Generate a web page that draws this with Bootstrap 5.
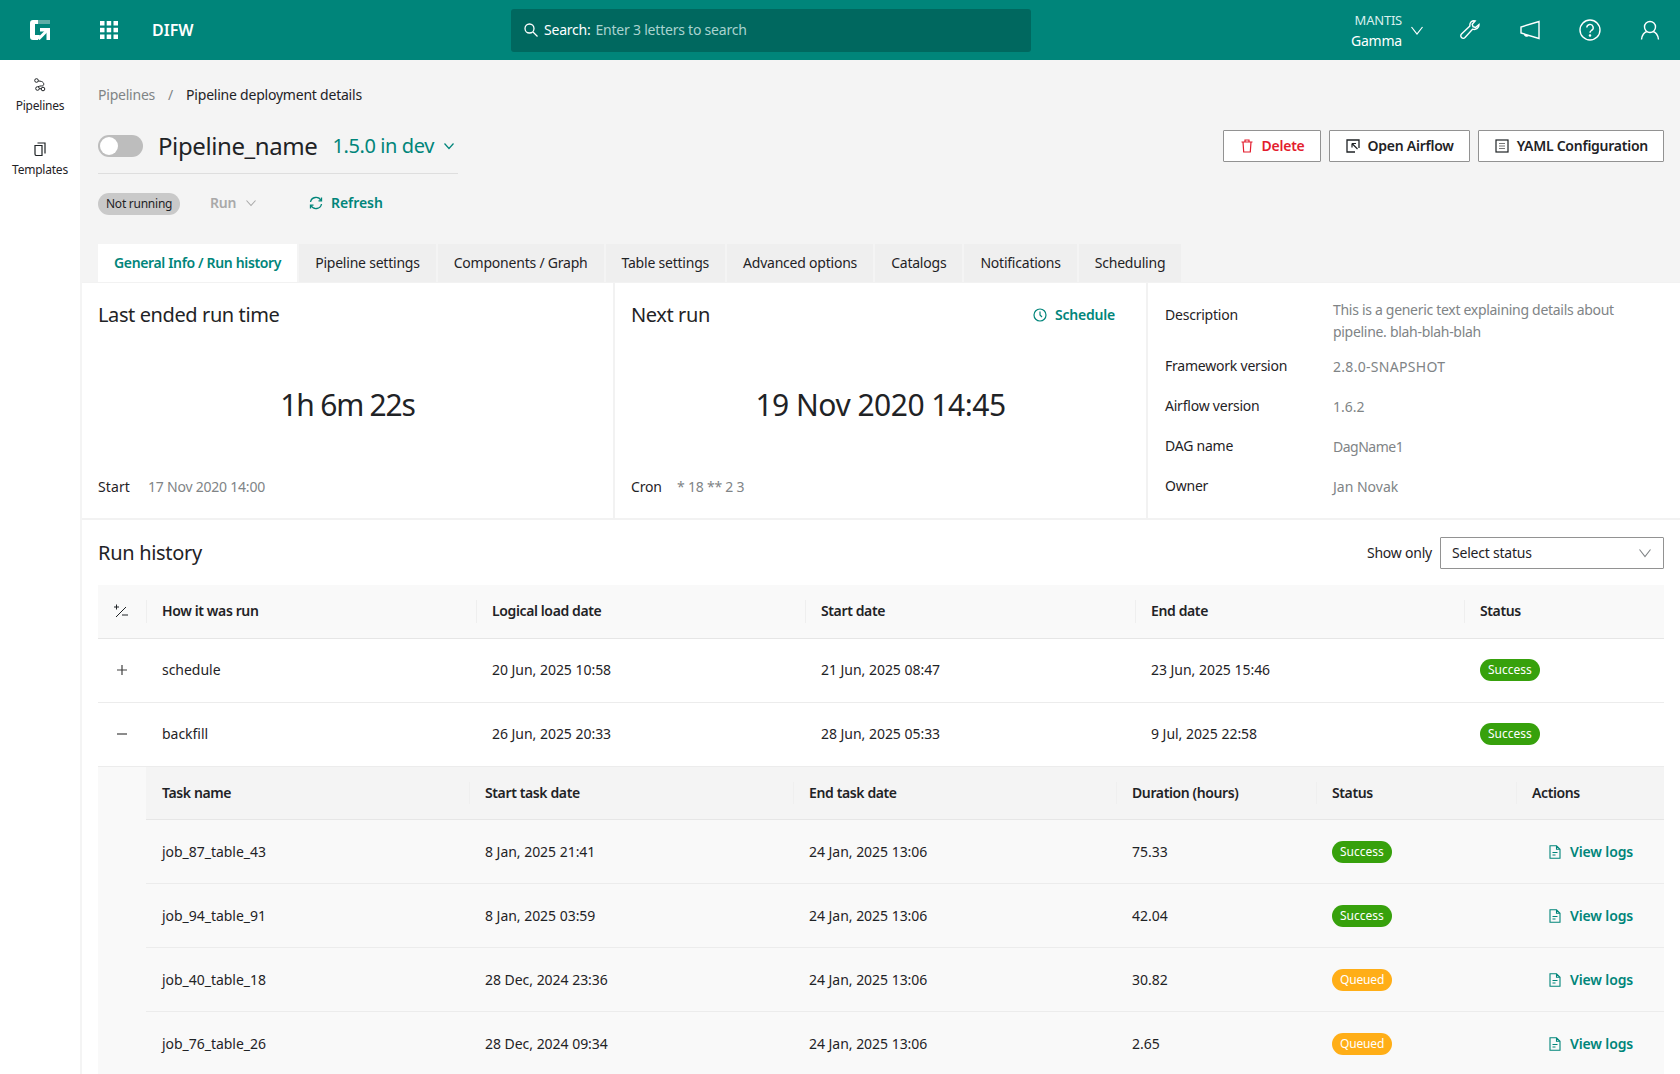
<!DOCTYPE html>
<html lang="en">
<head>
<meta charset="utf-8">
<title>DIFW</title>
<link href="https://cdn.jsdelivr.net/npm/bootstrap@5.3.0/dist/css/bootstrap.min.css" rel="stylesheet">
<style>
html,body{height:1074px;overflow:hidden}
body{font-family:"Noto Sans","Open Sans",sans-serif;font-size:14px;color:#1f2326;background:#f4f4f4;line-height:20px;letter-spacing:-.22px}
svg{display:block;flex:none}
.topbar{height:60px;background:#00857a;color:#fff}
.logo-cell{width:99px;padding-left:30px}
.apps-cell{width:53px}
.brand-name{font-size:16px;font-weight:600;width:359px;letter-spacing:0}
.search-box{width:520px;height:43px;background:#00685f;border-radius:3px;color:#fff;padding-left:12px;gap:5px}
.search-hint{color:#a9d3cf}
.env-box{margin-left:auto;width:106px;text-align:right;line-height:20px}
.env-box small{display:block;font-size:13px;color:#d8efed;margin-bottom:1px}
.top-icons{width:60px}
.sidebar{width:80px;background:#fff;font-size:12px;line-height:16px;flex:none}
.side-item{height:64px;padding-top:18px;gap:6px}
.main-pane{width:1600px}
.crumbs{height:62px;padding:25px 0 0 18px;gap:13px}
.crumb-dim{color:#808486}
.title-row{padding:0 16px 3px 18px;height:51px}
.switch-off{width:45px;height:22px;border-radius:11px;background:#bdbdbd;padding:2px;margin-right:15px}
.switch-off i{display:block;width:18px;height:18px;background:#fff;border-radius:50%}
.page-name{font-size:24px;line-height:32px;margin:0;font-weight:400;letter-spacing:-.4px}
.version-link{font-size:20px;color:#00857a;margin-left:15px;gap:9px;letter-spacing:-.4px}
.head-btn{height:32px;border:1px solid #929292;background:#fff;border-radius:1px;padding:0 15px 0 16px;font-weight:600;font-size:14px;color:#1f2326;gap:8px;letter-spacing:-.25px}
.head-btn.danger{color:#e31c2d}
.title-rule{width:360px;height:1px;background:#dedede;margin:0 0 0 18px}
.status-row{padding:19px 0 0 18px;height:70px}
.pill-idle{background:#c9c9c9;border-radius:11px;height:22px;padding:0 8px;font-size:12px;width:82px;white-space:nowrap;letter-spacing:-.25px}
.run-off{color:#a9a9a9;font-weight:600;margin-left:30px;gap:9px;width:99px}
.refresh-link{color:#00857a;font-weight:600;gap:8px;letter-spacing:-.05px}
.tab-strip{padding-left:18px;gap:2px;border:0;height:38px}
.tab-strip .nav-link{height:38px;border:0;border-radius:0;background:#efefef;color:#1f2326;padding:9px 16px;margin:0}
.tab-strip .nav-link.active{background:#fff;color:#00857a;font-weight:600;letter-spacing:-.35px}
.sum-panels{height:238px;background:#fff;border-bottom:2px solid #f2f2f2;border-top:1px solid #f2f2f2;margin-left:2px}
.sum-cell{width:533px;border-right:2px solid #f2f2f2;padding:18px 16px 0 16px;height:100%}
.sum-title{font-size:20px;line-height:28px;font-weight:400;margin:0;height:50px;letter-spacing:-.4px}
.big-value{font-size:30px;line-height:44px;text-align:center;height:93px;padding-top:32px;letter-spacing:-.5px}
.big-value.big-short{letter-spacing:-1.2px}
.meta-row{margin-top:33px}
.meta-start{width:50px;letter-spacing:.1px}
.meta-cron{width:46px}
.meta-dim{color:#808486}
.sched-link{color:#00857a;font-weight:600;gap:8px;padding-right:15px;font-size:14px}
.facts-cell{width:531px;padding:16px 16px 0 17px}
.fact-row{display:flex;min-height:40px}
.fact-row.fact-first{min-height:57px}
.fact-row.fact-first b{padding-top:6px}
.fact-row b{font-weight:400;width:168px;flex:none}
.fact-row span{color:#808486;line-height:22px;letter-spacing:0}
.fact-row.fact-first span{letter-spacing:-.3px}
.fact-row span.fact-wide{letter-spacing:.3px}
.fact-row span.fact-tight{letter-spacing:-.5px}
.history-pane{background:#fff;padding:0 16px;margin-left:2px;height:554px}
.history-head{height:65px}
.history-title{font-size:20px;margin:0;font-weight:400;letter-spacing:-.3px}
.status-pick{width:224px;height:32px;border:1px solid #929292;border-radius:1px;padding:0 11px;margin-left:8px}
.runs{table-layout:fixed;width:1566px;border-collapse:collapse;margin:0}
.runs th,.runs td{padding:0 0 0 16px;vertical-align:middle;border-bottom:1px solid #ececec;height:64px;font-weight:400;letter-spacing:-.03px}
.runs thead th{height:53px;font-weight:600;background:#f9f9f9;position:relative;border-bottom:1px solid #e6e6e6;letter-spacing:-.38px}
.runs thead th+th::before{content:"";position:absolute;left:0;top:15px;bottom:15px;width:1px;background:#efefef}
.runs td.toggle-cell{padding:0 0 0 18px}
.nested-wrap{padding:0 0 0 48px!important;background:#f9f9f9;border:0!important;height:auto!important}
.subruns{table-layout:fixed;width:1518px;border-collapse:collapse}
.subruns thead th{background:#f4f4f4}
.subruns td{background:#f9f9f9}
.pill-state{display:inline-block;height:22px;line-height:22px;border-radius:11px;padding:0 8px;color:#fff;font-size:12px;letter-spacing:0}
.pill-ok{background:#37a10c}
.pill-wait{background:#ffae17;letter-spacing:-.15px}
.log-link{color:#00857a;font-weight:600;gap:8px;padding-left:16px;letter-spacing:-.12px}
</style>
</head>
<body>
<header class="topbar d-flex align-items-center">
  <div class="logo-cell">
    <svg width="20" height="20" viewBox="0 0 20 20"><path d="M0 3a3 3 0 0 1 3-3h6v4H5v11h5l-2 5H3a3 3 0 0 1-3-3z" fill="#fff"/><path d="M8 0h12v4H8z" fill="#5fada6"/><path d="M10 8h10v12h-3.500v-8.500H10z" fill="#fff"/><path d="M8.500 19L18 9.500" stroke="#fff" stroke-width="3" fill="none"/></svg>
  </div>
  <div class="apps-cell">
    <svg width="20" height="20" viewBox="0 0 20 20" fill="#fff"><rect x="1" y="1" width="4.500" height="4.500"/><rect x="7.700" y="1" width="4.500" height="4.500"/><rect x="14.500" y="1" width="4.500" height="4.500"/><rect x="1" y="7.800" width="4.500" height="4.500"/><rect x="7.700" y="7.800" width="4.500" height="4.500"/><rect x="14.500" y="7.800" width="4.500" height="4.500"/><rect x="1" y="14.500" width="4.500" height="4.500"/><rect x="7.700" y="14.500" width="4.500" height="4.500"/><rect x="14.500" y="14.500" width="4.500" height="4.500"/></svg>
  </div>
  <div class="brand-name">DIFW</div>
  <div class="search-box d-flex align-items-center">
    <svg width="16" height="16" viewBox="0 0 16 16" fill="none" stroke="#fff" stroke-width="1.300"><circle cx="6.500" cy="6.500" r="4.500"/><path d="M10 10l4.500 4.500"/></svg>
    <span>Search:</span><span class="search-hint">Enter 3 letters to search</span>
  </div>
  <div class="env-box"><small>MANTIS</small>Gamma</div>
  <svg class="ms-2" width="14" height="14" viewBox="0 0 14 14" fill="none" stroke="#fff" stroke-width="1.200"><path d="M1.500 4l5.500 7 5.500-7"/></svg>
  <div class="top-icons d-flex justify-content-center ms-3">
    <svg width="20" height="20" viewBox="0 0 20 20" fill="none" stroke="#fff" stroke-width="1.400"><path d="M19 4.500l-3.500 3-2.500-.8-.8-2.500 3-3.300c-3-.8-5.800 1.500-5.300 5L1.500 14a2.400 2.400 0 0 0 3.500 3.500l7.500-8.300c3.500 1 6.800-1.500 6.500-4.700z"/></svg>
  </div>
  <div class="top-icons d-flex justify-content-center">
    <svg width="20" height="20" viewBox="0 0 20 20" fill="none" stroke="#fff" stroke-width="1.400"><path d="M19 1.500v17L1 13V7zM4.500 14a2.200 2.200 0 0 0 4 1.200"/></svg>
  </div>
  <div class="top-icons d-flex justify-content-center">
    <svg width="22" height="22" viewBox="0 0 22 22" fill="none" stroke="#fff" stroke-width="1.400"><circle cx="11" cy="11" r="10"/><path d="M7.800 8.500a3.200 3.200 0 1 1 4.600 3c-1 .6-1.400 1.200-1.400 2.300"/><circle cx="11" cy="16.500" r=".6" fill="#fff"/></svg>
  </div>
  <div class="top-icons d-flex justify-content-center">
    <svg width="20" height="20" viewBox="0 0 20 20" fill="none" stroke="#fff" stroke-width="1.400"><circle cx="10" cy="7" r="5.500"/><path d="M1.500 19.500c.3-4.500 3-7.500 5.500-8M18.500 19.500c-.3-4.500-3-7.500-5.500-8"/></svg>
  </div>
</header>
<div class="d-flex">
  <nav class="sidebar">
    <div class="side-item d-flex flex-column align-items-center">
      <svg width="14" height="14" viewBox="0 0 14 14" fill="none" stroke="#1f2326"><circle cx="3.500" cy="2.500" r="1.800"/><circle cx="10" cy="11" r="1.800"/><circle cx="4.500" cy="10.500" r="1.800"/><path d="M5.200 3c5.500 0 6.300 3 5 4.500-1 1-2.500-.2-5.200 1.300M6.300 10.700h1.900"/></svg>
      <span>Pipelines</span>
    </div>
    <div class="side-item d-flex flex-column align-items-center">
      <svg width="14" height="14" viewBox="0 0 14 14" fill="none" stroke="#1f2326" stroke-width="1.200"><path d="M2 3.500h7v10H3.500A1.500 1.500 0 0 1 2 12z"/><path d="M4.500 1h7.500v10.500"/></svg>
      <span>Templates</span>
    </div>
  </nav>
  <main class="main-pane">
    <div class="crumbs d-flex"><span class="crumb-dim">Pipelines</span><span class="crumb-dim">/</span><span>Pipeline deployment details</span></div>
    <div class="title-row d-flex align-items-center">
      <div class="switch-off"><i></i></div>
      <h1 class="page-name">Pipeline_name</h1>
      <div class="version-link d-flex align-items-center">1.5.0 in dev
        <svg width="12" height="12" viewBox="0 0 12 12" fill="none" stroke="#00857a" stroke-width="1.200"><path d="M1.500 3.500l4.500 5 4.500-5"/></svg>
      </div>
      <div class="d-flex ms-auto gap-2">
        <button class="head-btn danger d-flex align-items-center" type="button">
          <svg width="14" height="14" viewBox="0 0 14 14" fill="none" stroke="#e31c2d" stroke-width="1.200"><path d="M1.500 3h11M3 3l.7 10h6.600L11 3M5 3V1h4v2"/></svg>Delete</button>
        <button class="head-btn d-flex align-items-center" type="button">
          <svg width="14" height="14" viewBox="0 0 14 14" fill="none" stroke="#1f2326" stroke-width="1.300"><path d="M9 13H1V1h12v8"/><path d="M6 4.500h4M6 4.500v4M6 4.500l5.500 5.500" stroke-width="1.200"/></svg>Open Airflow</button>
        <button class="head-btn d-flex align-items-center" type="button">
          <svg width="14" height="14" viewBox="0 0 14 14" fill="none" stroke="#1f2326" stroke-width="1.200"><rect x="1" y="1" width="12" height="12"/><path d="M4 4.500h6M4 7h6M4 9.500h6" stroke="#777"/></svg>YAML Configuration</button>
      </div>
    </div>
    <div class="title-rule"></div>
    <div class="status-row d-flex align-items-start">
      <span class="pill-idle d-flex align-items-center">Not running</span>
      <span class="run-off d-flex align-items-center">Run
        <svg width="12" height="12" viewBox="0 0 12 12" fill="none" stroke="#a9a9a9" stroke-width="1.100"><path d="M1.500 3.500l4.500 5 4.500-5"/></svg></span>
      <span class="refresh-link d-flex align-items-center">
        <svg width="14" height="14" viewBox="0 0 14 14" fill="none" stroke="#00857a" stroke-width="1.300"><path d="M1.500 6A5.600 5.600 0 0 1 12 4.500M12.500 8A5.600 5.600 0 0 1 2 9.500"/><path d="M12.500 1.500v3.300H9.500M1.500 12.500V9.200h3"/></svg>Refresh</span>
    </div>
    <ul class="nav tab-strip">
      <li class="nav-item"><a class="nav-link active" href="#">General Info / Run history</a></li>
      <li class="nav-item"><a class="nav-link" href="#">Pipeline settings</a></li>
      <li class="nav-item"><a class="nav-link" href="#">Components / Graph</a></li>
      <li class="nav-item"><a class="nav-link" href="#">Table settings</a></li>
      <li class="nav-item"><a class="nav-link" href="#">Advanced options</a></li>
      <li class="nav-item"><a class="nav-link" href="#">Catalogs</a></li>
      <li class="nav-item"><a class="nav-link" href="#">Notifications</a></li>
      <li class="nav-item"><a class="nav-link" href="#">Scheduling</a></li>
    </ul>
    <section class="sum-panels d-flex">
      <div class="sum-cell">
        <h2 class="sum-title">Last ended run time</h2>
        <div class="big-value big-short">1h 6m 22s</div>
        <div class="meta-row d-flex"><span class="meta-start">Start</span><span class="meta-dim">17 Nov 2020 14:00</span></div>
      </div>
      <div class="sum-cell">
        <div class="d-flex justify-content-between align-items-start">
          <h2 class="sum-title">Next run</h2>
          <span class="sched-link d-flex align-items-center pt-1">
            <svg width="14" height="14" viewBox="0 0 14 14" fill="none" stroke="#00857a" stroke-width="1.200"><circle cx="7" cy="7" r="6"/><path d="M7 3.500V7l2 2"/></svg>Schedule</span>
        </div>
        <div class="big-value">19 Nov 2020 14:45</div>
        <div class="meta-row d-flex"><span class="meta-cron">Cron</span><span class="meta-dim">* 18 ** 2 3</span></div>
      </div>
      <div class="facts-cell">
        <div class="fact-row fact-first"><b>Description</b><span>This is a generic text explaining details about pipeline. blah-blah-blah</span></div>
        <div class="fact-row"><b>Framework version</b><span class="fact-wide">2.8.0-SNAPSHOT</span></div>
        <div class="fact-row"><b>Airflow version</b><span>1.6.2</span></div>
        <div class="fact-row"><b>DAG name</b><span class="fact-tight">DagName1</span></div>
        <div class="fact-row"><b>Owner</b><span>Jan Novak</span></div>
      </div>
    </section>
    <section class="history-pane">
      <div class="history-head d-flex align-items-center">
        <h2 class="history-title">Run history</h2>
        <span class="ms-auto">Show only</span>
        <div class="status-pick d-flex align-items-center justify-content-between">Select status
          <svg width="14" height="14" viewBox="0 0 14 14" fill="none" stroke="#808486" stroke-width="1.100"><path d="M1.500 3.500L7 10.500l5.500-7"/></svg></div>
      </div>
      <table class="runs">
        <colgroup><col style="width:48px"><col style="width:330px"><col style="width:329px"><col style="width:330px"><col style="width:329px"><col style="width:200px"></colgroup>
        <thead><tr>
          <th><svg width="14" height="14" viewBox="0 0 14 14" fill="none" stroke="#1f2326"><path d="M0 3h5M2.500 .5v5M8 11h6M2 13L12 3"/></svg></th>
          <th>How it was run</th><th>Logical load date</th><th>Start date</th><th>End date</th><th>Status</th>
        </tr></thead>
        <tbody>
          <tr>
            <td class="toggle-cell"><svg width="12" height="12" viewBox="0 0 12 12" stroke="#404040" stroke-width="1.200"><path d="M1 6h10M6 1v10"/></svg></td>
            <td>schedule</td><td>20 Jun, 2025 10:58</td><td>21 Jun, 2025 08:47</td><td>23 Jun, 2025 15:46</td><td><span class="pill-state pill-ok">Success</span></td>
          </tr>
          <tr>
            <td class="toggle-cell"><svg width="12" height="12" viewBox="0 0 12 12" stroke="#404040" stroke-width="1.200"><path d="M1 6h10"/></svg></td>
            <td>backfill</td><td>26 Jun, 2025 20:33</td><td>28 Jun, 2025 05:33</td><td>9 Jul, 2025 22:58</td><td><span class="pill-state pill-ok">Success</span></td>
          </tr>
          <tr><td colspan="6" class="nested-wrap">
            <table class="runs subruns">
              <colgroup><col style="width:323px"><col style="width:324px"><col style="width:323px"><col style="width:200px"><col style="width:200px"><col style="width:148px"></colgroup>
              <thead><tr><th>Task name</th><th>Start task date</th><th>End task date</th><th>Duration (hours)</th><th>Status</th><th>Actions</th></tr></thead>
              <tbody>
                <tr><td>job_87_table_43</td><td>8 Jan, 2025 21:41</td><td>24 Jan, 2025 13:06</td><td>75.33</td><td><span class="pill-state pill-ok">Success</span></td>
                  <td><span class="log-link d-flex align-items-center"><svg width="14" height="14" viewBox="0 0 14 14" fill="none" stroke="#00857a" stroke-width="1.100"><path d="M2 .8h6.500L12 4.300V13.200H2zM8.500 .8v3.500H12M4.500 7.500h5M4.500 10h3"/></svg>View logs</span></td></tr>
                <tr><td>job_94_table_91</td><td>8 Jan, 2025 03:59</td><td>24 Jan, 2025 13:06</td><td>42.04</td><td><span class="pill-state pill-ok">Success</span></td>
                  <td><span class="log-link d-flex align-items-center"><svg width="14" height="14" viewBox="0 0 14 14" fill="none" stroke="#00857a" stroke-width="1.100"><path d="M2 .8h6.500L12 4.300V13.200H2zM8.500 .8v3.500H12M4.500 7.500h5M4.500 10h3"/></svg>View logs</span></td></tr>
                <tr><td>job_40_table_18</td><td>28 Dec, 2024 23:36</td><td>24 Jan, 2025 13:06</td><td>30.82</td><td><span class="pill-state pill-wait">Queued</span></td>
                  <td><span class="log-link d-flex align-items-center"><svg width="14" height="14" viewBox="0 0 14 14" fill="none" stroke="#00857a" stroke-width="1.100"><path d="M2 .8h6.500L12 4.300V13.200H2zM8.500 .8v3.500H12M4.500 7.500h5M4.500 10h3"/></svg>View logs</span></td></tr>
                <tr><td>job_76_table_26</td><td>28 Dec, 2024 09:34</td><td>24 Jan, 2025 13:06</td><td>2.65</td><td><span class="pill-state pill-wait">Queued</span></td>
                  <td><span class="log-link d-flex align-items-center"><svg width="14" height="14" viewBox="0 0 14 14" fill="none" stroke="#00857a" stroke-width="1.100"><path d="M2 .8h6.500L12 4.300V13.200H2zM8.500 .8v3.500H12M4.500 7.500h5M4.500 10h3"/></svg>View logs</span></td></tr>
              </tbody>
            </table>
          </td></tr>
        </tbody>
      </table>
    </section>
  </main>
</div>
</body>
</html>
